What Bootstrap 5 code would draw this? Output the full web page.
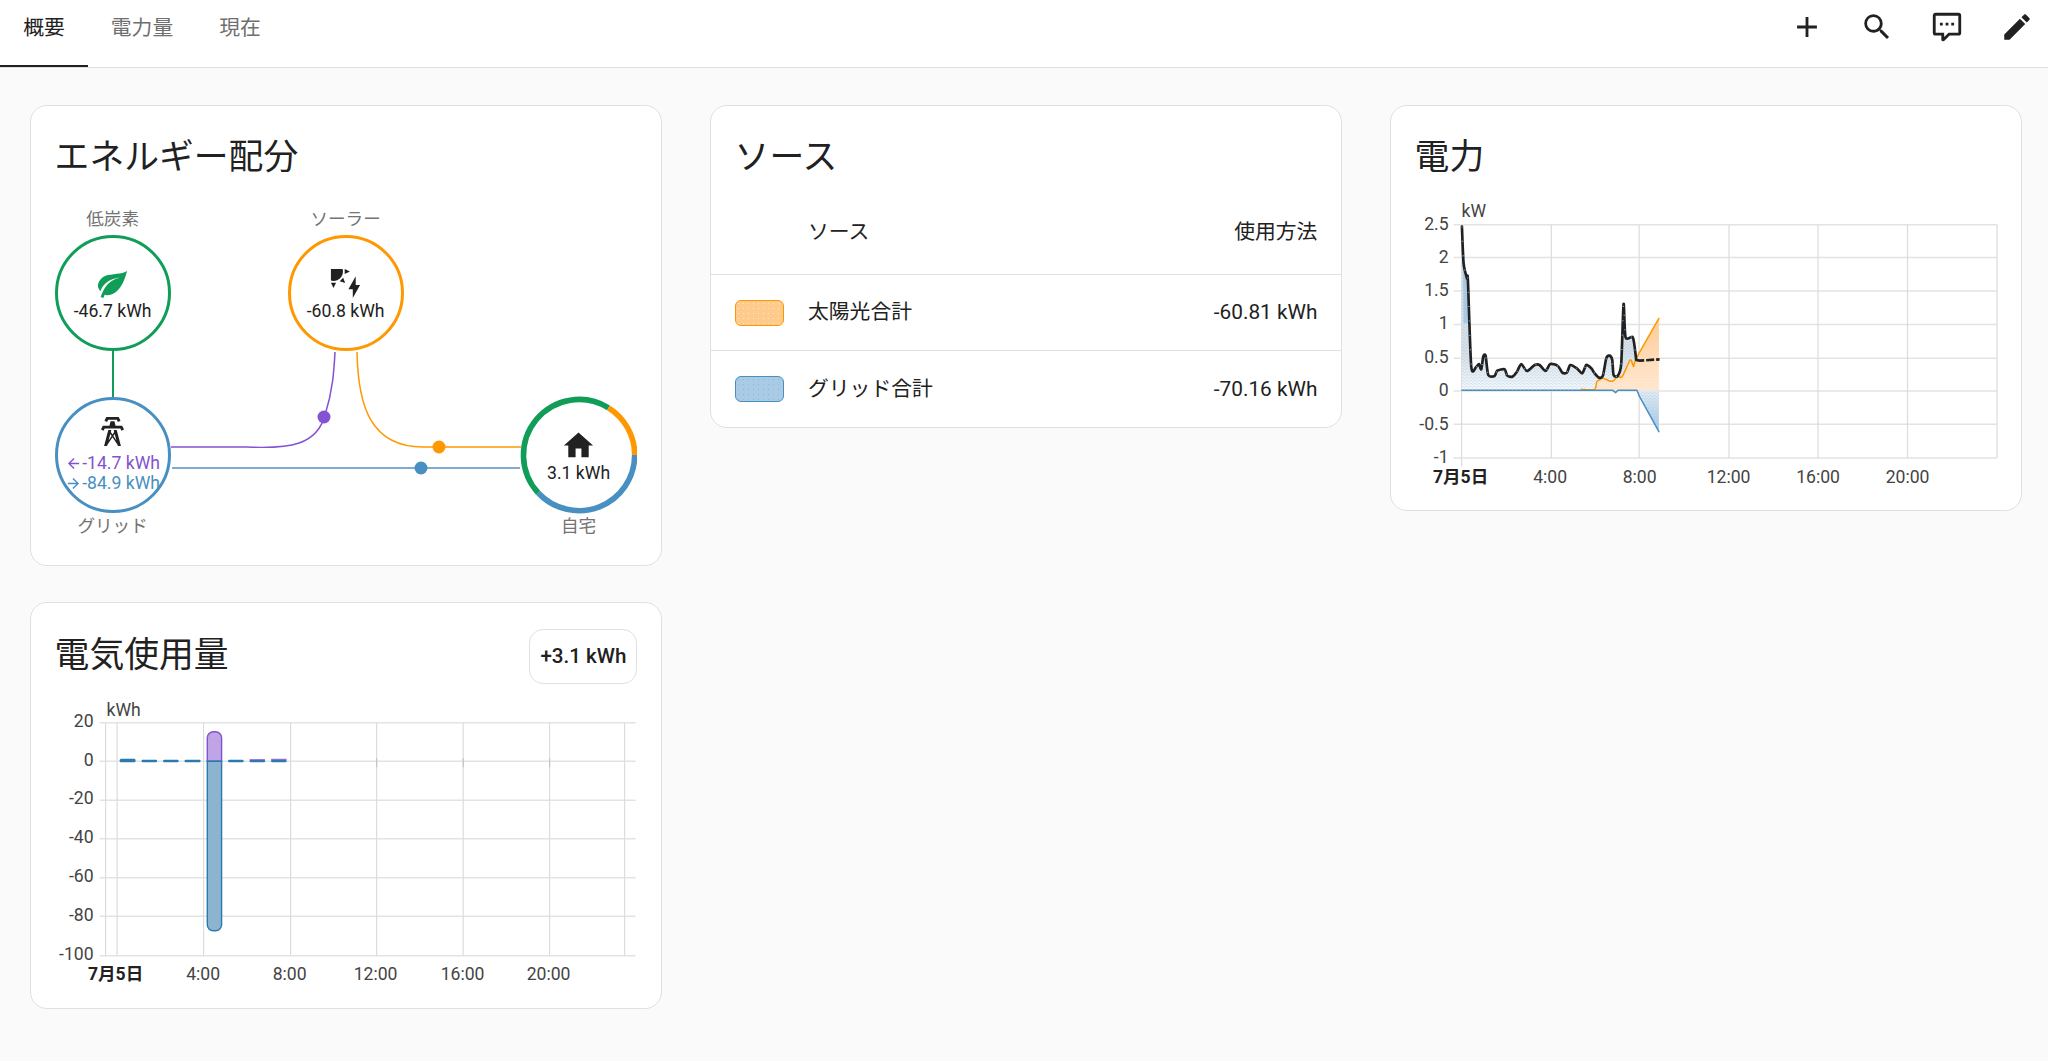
<!DOCTYPE html>
<html lang="ja">
<head>
    <meta charset="UTF-8">
    <meta name="viewport" content="width=device-width, initial-scale=1.0">
    <title>エネルギー</title>
    <link rel="stylesheet" href="https://cdn.jsdelivr.net/npm/bootstrap@5.3.0/dist/css/bootstrap.min.css">
    <style>
        body {
            background: #fafafa;
            color: #212121;
            font-family: Roboto, "Noto Sans CJK JP", sans-serif;
            font-size: 20.8px;
        }
        .top-bar {
            height: 68.4px;
            background: #fff;
            border-bottom: 1.4px solid #e0e0e0;
        }
        .tab-link {
            width: 88px;
            height: 67px;
            padding: 0;
            line-height: 57px;
            text-align: center;
            color: #6f6f6f;
            font-size: 20.8px;
        }
        .tab-link.active {
            color: #212121;
            border-bottom: 2.8px solid #212121;
        }
        .tab-link + .tab-link { margin-left: 10px; }
        .bar-icons {
            gap: 36px;
            padding-right: 14.5px;
            padding-bottom: 14px;
        }
        .bar-icons svg { width: 34px; height: 34px; fill: #212121; }
        .page-cols {
            gap: 48px;
            padding: 36.6px 26px 0 30px;
        }
        .page-col {
            width: 632px;
            gap: 36px;
        }
        .dash-card {
            --bs-card-border-color: #e0e0e0;
            --bs-card-border-width: 1.4px;
            --bs-card-border-radius: 17px;
            --bs-card-inner-border-radius: 16px;
            background: #fff;
        }
        .dash-head {
            height: 84.6px;
            padding: 31.5px 23.6px 0;
        }
        .dash-title {
            font-size: 34.8px;
            font-weight: 400;
            line-height: 1.2;
            margin: 0;
            color: #212121;
        }
        .usage-head { padding-top: 0; }
        .usage-head .dash-title { margin-top: 32px; }
        .total-chip {
            height: 55px;
            width: 108px;
            margin-top: 25.6px;
            border: 1.4px solid #e0e0e0;
            border-radius: 14px;
            background: #fff;
            color: #212121;
            font-size: 20.6px;
            font-weight: 500;
            padding: 0;
        }
        .flow-area {
            position: relative;
            width: 582px;
            height: 340px;
            margin: 9px 0 25.4px 23.6px;
        }
        .flow-lines {
            position: absolute;
            left: 0;
            top: 0;
            width: 582px;
            height: 340px;
        }
        .flow-node {
            position: absolute;
            width: 116px;
            text-align: center;
        }
        .flow-label {
            height: 35px;
            line-height: 38px;
            font-size: 17.6px;
            color: #737373;
        }
        .flow-label.under { height: 26px; line-height: 27px; }
        .flow-ring {
            width: 116px;
            height: 116px;
            padding-top: 2px;
            border-radius: 50%;
            border: 3.4px solid #0f9d58;
            background: #fff;
            font-size: 17.6px;
            line-height: 20px;
            color: #212121;
            white-space: nowrap;
        }
        .flow-ring svg.node-icon { width: 35px; height: 35px; fill: #212121; flex: none; }
        .flow-ring svg.node-icon.leaf-icon { fill: #0f9d58; }
        .flow-ring svg.node-arrow { width: 17px; height: 17px; fill: currentColor; flex: none; }
        .ring-solar { border-color: #ff9800; }
        .ring-grid { border-color: #488fc2; padding: 0 0 2px; }
        .ring-home { border-color: transparent; background: none; }
        .text-return { color: #8353d1; }
        .text-grid { color: #488fc2; }
        .node-low { left: 0; top: 0; }
        .node-solar { left: 233px; top: 0; }
        .node-grid { left: 0; top: 197px; }
        .node-home { left: 466px; top: 197px; }
        .source-table {
            --bs-table-border-color: #e0e0e0;
            --bs-table-bg: transparent;
            font-size: 20.8px;
            color: #212121;
            margin: 0;
        }
        .source-table th { height: 84px; font-weight: 400; border-bottom-width: 1.4px; padding: 0 23.6px 0 0; }
        .source-table td { height: 76.4px; border-bottom-width: 1.4px; padding: 0 23.6px 0 0; }
        .source-table tr:last-child td { border-bottom: 0; height: 76.2px; }
        .source-table .swatch-cell { width: 97px; padding: 0 0 0 23.6px; }
        .source-swatch {
            width: 49.5px;
            height: 26px;
            border-radius: 6px;
            border: 1.4px solid #ff9800;
            background-color: #ffcb8d;
            background-image: radial-gradient(#ffe6c8 .7px, transparent .8px);
            background-size: 5px 5px;
        }
        .source-swatch.grid-swatch {
            border-color: #488fc2;
            background-color: #a9cbe6;
            background-image: radial-gradient(#8fb6d6 .7px, transparent .8px);
        }
        .chart-svg { display: block; }
        .chart-svg text { font-size: 17.6px; fill: #444; font-family: Roboto, "Noto Sans CJK JP", sans-serif; }
        .chart-svg text.day-tick { font-weight: 700; fill: #212121; }
        .grid-line { stroke: #e3e3e3; stroke-width: 1.4; fill: none; }
        .grid-line .grid-vert { stroke: #dcdcdc; stroke-width: 1.2; }
    </style>
</head>
<body>
    <!-- Top bar -->
    <header class="top-bar d-flex justify-content-between align-items-center">
        <nav class="nav align-self-start">
            <a class="nav-link tab-link active" href="#">概要</a>
            <a class="nav-link tab-link" href="#">電力量</a>
            <a class="nav-link tab-link" href="#">現在</a>
        </nav>
        <div class="bar-icons d-flex align-items-center">
            <svg viewBox="0 0 24 24"><path d="M19,13H13V19H11V13H5V11H11V5H13V11H19V13Z"/></svg>
            <svg viewBox="0 0 24 24"><path d="M9.5,3A6.5,6.5 0 0,1 16,9.5C16,11.11 15.41,12.59 14.44,13.73L14.71,14H15.5L20.5,19L19,20.5L14,15.5V14.71L13.73,14.44C12.59,15.41 11.11,16 9.5,16A6.5,6.5 0 0,1 3,9.5A6.5,6.5 0 0,1 9.5,3M9.5,5C7,5 5,7 5,9.5C5,12 7,14 9.5,14C12,14 14,12 14,9.5C14,7 12,5 9.5,5Z"/></svg>
            <svg viewBox="0 0 24 24"><path d="M9,22A1,1 0 0,1 8,21V18H4A2,2 0 0,1 2,16V4C2,2.89 2.9,2 4,2H20A2,2 0 0,1 22,4V16A2,2 0 0,1 20,18H13.9L10.2,21.71C10,21.9 9.75,22 9.5,22V22H9M10,16V19.08L13.08,16H20V4H4V16H10M17,11V9H15V11H17M13,11V9H11V11H13M9,11V9H7V11H9Z"/></svg>
            <svg viewBox="0 0 24 24"><path d="M20.71,7.04C21.1,6.65 21.1,6 20.71,5.63L18.37,3.29C18,2.9 17.35,2.9 16.96,3.29L15.12,5.12L18.87,8.87M3,17.25V21H6.75L17.81,9.93L14.06,6.18L3,17.25Z"/></svg>
        </div>
    </header>

    <main class="page-cols d-flex align-items-start">
        <!-- Left column -->
        <div class="page-col d-flex flex-column">
            <section class="card dash-card">
                <div class="dash-head"><h2 class="dash-title">エネルギー配分</h2></div>
                <div class="flow-area">
                    <svg class="flow-lines" viewBox="0 0 582 340" fill="none">
                        <path d="M58 151V197" stroke="#0f9d58" stroke-width="2"/>
                        <path d="M116 247H192C235 249 262 245 270 215C278 190 279 170 280 152" stroke="#8353d1" stroke-width="1.5"/>
                        <path d="M302 152C303 205 315 247 368 247H466" stroke="#ff9800" stroke-width="1.5"/>
                        <path d="M117 268H465" stroke="#7fabcd" stroke-width="2"/>
                        <circle cx="269" cy="217" r="6.5" fill="#8353d1"/>
                        <circle cx="384" cy="247" r="6.5" fill="#ff9800"/>
                        <circle cx="366" cy="268" r="6.5" fill="#488fc2"/>
                    </svg>
                    <div class="flow-node node-low">
                        <div class="flow-label">低炭素</div>
                        <div class="flow-ring d-flex flex-column align-items-center justify-content-center">
                            <svg class="node-icon leaf-icon" viewBox="0 0 24 24"><path d="M17,8C8,10 5.9,16.17 3.82,21.34L5.71,22L6.66,19.7C7.14,19.87 7.64,20 8,20C19,20 22,3 22,3C21,5 14,5.25 9,6.25C4,7.25 2,11.5 2,13.5C2,15.5 3.75,17.25 3.75,17.25C7,8 17,8 17,8Z"/></svg>
                            <div>-46.7 kWh</div>
                        </div>
                    </div>
                    <div class="flow-node node-solar">
                        <div class="flow-label">ソーラー</div>
                        <div class="flow-ring ring-solar d-flex flex-column align-items-center justify-content-center">
                            <svg class="node-icon" viewBox="0 0 24 24"><path d="M11.45,2V5.55L15,3.77L11.45,2M10.45,8L8,10.46L11.75,11.71L10.45,8M2,11.45L3.77,15L5.55,11.45H2M10,2H2V10C2.57,10.17 3.17,10.25 3.77,10.25C7.35,10.26 10.26,7.35 10.27,3.75C10.26,3.16 10.17,2.57 10,2M17,22V16H14L19,7V13H22L17,22Z"/></svg>
                            <div>-60.8 kWh</div>
                        </div>
                    </div>
                    <div class="flow-node node-grid">
                        <div class="flow-ring ring-grid d-flex flex-column align-items-center justify-content-center">
                            <svg class="node-icon" viewBox="0 0 24 24"><path d="M8.28,5.45L6.5,4.55L7.76,2H16.23L17.5,4.55L15.72,5.44L15,4H9L8.28,5.45M18.62,8H14.09L13.3,5H10.7L9.91,8H5.38L4.1,10.55L5.89,11.44L6.62,10H17.38L18.1,11.45L19.89,10.56L18.62,8M17.77,22H15.7L15.46,21.1L12,15.9L8.53,21.1L8.3,22H6.23L9.12,11H11.19L10.83,12.35L12,14.1L13.16,12.35L12.81,11H14.88L17.77,22M11.4,15L10.5,13.65L9.32,18.13L11.4,15M14.68,18.12L13.5,13.64L12.6,15L14.68,18.12Z"/></svg>
                            <div class="text-return d-flex align-items-center mt-1"><svg class="node-arrow" viewBox="0 0 24 24"><path d="M20,11V13H8L13.5,18.5L12.08,19.92L4.16,12L12.08,4.08L13.5,5.5L8,11H20Z"/></svg>-14.7 kWh</div>
                            <div class="text-grid d-flex align-items-center"><svg class="node-arrow" viewBox="0 0 24 24"><path d="M4,11V13H16L10.5,18.5L11.92,19.92L19.84,12L11.92,4.08L10.5,5.5L16,11H4Z"/></svg>-84.9 kWh</div>
                        </div>
                        <div class="flow-label under">グリッド</div>
                    </div>
                    <div class="flow-node node-home">
                        <div class="flow-ring ring-home d-flex flex-column align-items-center justify-content-center">
                            <svg class="node-icon" viewBox="0 0 24 24"><path d="M10,20V14H14V20H19V12H22L12,3L2,12H5V20H10Z"/></svg>
                            <div>3.1 kWh</div>
                        </div>
                        <div class="flow-label under">自宅</div>
                    </div>
                    <svg class="flow-lines" viewBox="0 0 582 340" fill="none" stroke-width="5.6">
                        <path d="M483.3 293A55.7 55.7 0 0 1 553.5 207.8" stroke="#0f9d58"/>
                        <path d="M553.5 207.8A55.7 55.7 0 0 1 579.7 255" stroke="#ff9800"/>
                        <path d="M579.7 255A55.7 55.7 0 0 1 483.3 293" stroke="#488fc2"/>
                    </svg>
                </div>
            </section>

            <section class="card dash-card">
                <div class="dash-head usage-head d-flex justify-content-between align-items-start">
                    <h2 class="dash-title">電気使用量</h2>
                    <button class="btn total-chip" type="button">+3.1 kWh</button>
                </div>
                <svg class="chart-svg" width="629.2" height="320.6" viewBox="31.4 688.7 629.2 320.6">
                    <text x="107" y="716.5">kWh</text>
                    <g class="grid-line">
                        <path d="M100 723.5H636M100 762H636M100 801H636M100 839.5H636M100 878.5H636M100 917H636M100 956.5H636"/>
                        <path class="grid-vert" d="M106 723.5V956.5M117.5 723.5V956.5M204 723.5V956.5M291 723.5V956.5M377 723.5V956.5M463.6 723.5V956.5M550 723.5V956.5M625 723.5V956.5"/>
                    </g>
                    <path d="M377 759V768M463.6 759V768M550 759V768" stroke="#c4c4c4" stroke-width="1.2"/>
                    <g text-anchor="end">
                        <text x="94" y="728">20</text>
                        <text x="94" y="767">0</text>
                        <text x="94" y="805">-20</text>
                        <text x="94" y="844">-40</text>
                        <text x="94" y="883">-60</text>
                        <text x="94" y="922">-80</text>
                        <text x="94" y="961">-100</text>
                    </g>
                    <g text-anchor="middle">
                        <text class="day-tick" x="116" y="981">7月5日</text>
                        <text x="203.5" y="981">4:00</text>
                        <text x="290" y="981">8:00</text>
                        <text x="376" y="981">12:00</text>
                        <text x="463" y="981">16:00</text>
                        <text x="549" y="981">20:00</text>
                    </g>
                    <!-- daily bars, almost all of them sit on the zero line -->
                    <g fill="#2a7ab0">
                        <rect x="120" y="759.5" width="16" height="3.5" rx="1.5"/>
                        <rect x="142" y="760.5" width="15.5" height="2.5" rx="1"/>
                        <rect x="163.5" y="760.5" width="15.5" height="2.5" rx="1"/>
                        <rect x="185" y="760.5" width="16" height="2.5" rx="1"/>
                        <rect x="228.5" y="760.5" width="15.5" height="2.5" rx="1"/>
                        <rect x="250" y="760.5" width="15.5" height="2.5" rx="1"/>
                        <rect x="271.5" y="760.5" width="15.5" height="2.5" rx="1"/>
                    </g>
                    <path d="M250 760.5H265.5M271.5 760H287" stroke="#8353d1" stroke-width="1"/>
                    <path d="M207.7 762V738.5A6 6 0 0 1 213.7 732.5H216A6 6 0 0 1 222 738.5V762Z" fill="#bfa5e6" stroke="#8353d1" stroke-width="1.4"/>
                    <path d="M207.7 762V925.5A6 6 0 0 0 213.7 931.5H216A6 6 0 0 0 222 925.5V762Z" fill="#8cb4d0" stroke="#2a7ab0" stroke-width="1.4"/>
                </svg>
            </section>
        </div>

        <!-- Middle column -->
        <div class="page-col d-flex flex-column">
            <section class="card dash-card">
                <div class="dash-head"><h2 class="dash-title">ソース</h2></div>
                <table class="table source-table">
                    <thead class="align-middle">
                        <tr><th class="swatch-cell"></th><th>ソース</th><th class="text-end">使用方法</th></tr>
                    </thead>
                    <tbody class="align-middle">
                        <tr>
                            <td class="swatch-cell"><div class="source-swatch"></div></td>
                            <td>太陽光合計</td>
                            <td class="text-end">-60.81 kWh</td>
                        </tr>
                        <tr>
                            <td class="swatch-cell"><div class="source-swatch grid-swatch"></div></td>
                            <td>グリッド合計</td>
                            <td class="text-end">-70.16 kWh</td>
                        </tr>
                    </tbody>
                </table>
            </section>
        </div>

        <!-- Right column -->
        <div class="page-col d-flex flex-column">
            <section class="card dash-card">
                <div class="dash-head"><h2 class="dash-title">電力</h2></div>
                <svg class="chart-svg" width="629.2" height="319" viewBox="1391.4 191 629.2 319">
                    <defs>
                        <pattern id="dotsBlue" width="12" height="9" patternUnits="userSpaceOnUse">
                            <circle cx="3" cy="2" r="1.6" fill="#8fbce0"/>
                            <circle cx="9" cy="6.5" r="1.6" fill="#8fbce0"/>
                        </pattern>
                        <pattern id="dotsOrange" width="12" height="9" patternUnits="userSpaceOnUse">
                            <circle cx="3" cy="2" r="1.6" fill="#ffcf9e"/>
                            <circle cx="9" cy="6.5" r="1.6" fill="#ffcf9e"/>
                        </pattern>
                        <linearGradient id="fadeBlue" gradientUnits="userSpaceOnUse" x1="0" y1="430" x2="0" y2="541">
                            <stop offset="0" stop-color="#dbe1e7"/>
                            <stop offset="1" stop-color="#f9fbfc"/>
                        </linearGradient>
                        <linearGradient id="fadeDown" x1="0" y1="0" x2="0" y2="1">
                            <stop offset="0" stop-color="#e8eef3"/>
                            <stop offset="1" stop-color="#a3c8e6"/>
                        </linearGradient>
                        <linearGradient id="fadeOrange" gradientUnits="userSpaceOnUse" x1="0" y1="325" x2="0" y2="541">
                            <stop offset="0" stop-color="#ffc890"/>
                            <stop offset=".6" stop-color="#ffdfc0"/>
                            <stop offset="1" stop-color="#ffead6"/>
                        </linearGradient>
                    </defs>
                    <text x="1462" y="217">kW</text>
                    <g class="grid-line">
                        <path d="M1454 224.7H1997.5M1454 257.5H1997.5M1454 291H1997.5M1454 324.5H1997.5M1454 358.3H1997.5M1454 391H1997.5M1454 424.3H1997.5M1454 458H1997.5"/>
                        <path class="grid-vert" d="M1462 224.7V466M1551.7 224.7V458M1639.5 224.7V458M1729.4 224.7V458M1818.4 224.7V458M1907.9 224.7V458M1997.4 224.7V458"/>
                    </g>
                    <g text-anchor="end">
                        <text x="1449" y="230">2.5</text>
                        <text x="1449" y="263">2</text>
                        <text x="1449" y="296.5">1.5</text>
                        <text x="1449" y="329.5">1</text>
                        <text x="1449" y="363">0.5</text>
                        <text x="1449" y="396">0</text>
                        <text x="1449" y="430">-0.5</text>
                        <text x="1449" y="463">-1</text>
                    </g>
                    <g text-anchor="middle">
                        <text class="day-tick" x="1461" y="483">7月5日</text>
                        <text x="1550.5" y="483">4:00</text>
                        <text x="1640" y="483">8:00</text>
                        <text x="1729" y="483">12:00</text>
                        <text x="1818.5" y="483">16:00</text>
                        <text x="1908" y="483">20:00</text>
                    </g>
                    <!-- traces measured at 3x, so the group below is scaled by a third -->
                    <g transform="translate(1440 210) scale(.3333)" fill="none" stroke-linejoin="round" stroke-linecap="round">
                        <path id="homeFill" fill="url(#fadeBlue)"/>
                        <path id="homeDots" fill="url(#dotsBlue)"/>
                        <path d="M70 160L82 205L87 340L72 340Z" fill="#a8c8e4"/>
                        <path id="solarFill" fill="url(#fadeOrange)"/>
                        <path id="solarDots" fill="url(#dotsOrange)"/>
                        <path d="M592 542L600 560L658 665V542Z" fill="url(#fadeDown)"/>
                        <path d="M592 542L600 560L658 665V542Z" fill="url(#dotsBlue)"/>
                        <path id="solarLine" stroke="#ff9800" stroke-width="4.5"/>
                        <path d="M67 541H520L528 548L535 541H592L600 560L658 665" stroke="#488fc2" stroke-width="4.5"/>
                        <path id="homeLine" stroke="#212121" stroke-width="8"/>
                        <path id="homeDash" stroke="#6ea9d8" stroke-width="4" stroke-linecap="butt" stroke-dasharray="3 40"/>
                        <path d="M590 450L600 452L660 448" stroke="#212121" stroke-width="8" stroke-linecap="butt" stroke-dasharray="24 6"/>
                    </g>
                </svg>
            </section>
        </div>
    </main>

    <script src="https://cdn.jsdelivr.net/npm/bootstrap@5.3.0/dist/js/bootstrap.bundle.min.js"></script>
    <script>
        const homePts = [[67,50],[72,160],[82,205],[85,212],[95,470],[110,470],[118,462],[125,478],[131,440],[138,437],[146,495],[165,498],[173,482],[195,478],[203,497],[218,500],[232,485],[245,462],[262,483],[285,465],[300,465],[318,483],[332,462],[355,468],[368,488],[382,488],[392,465],[412,475],[428,490],[440,465],[455,475],[465,490],[478,503],[490,497],[500,445],[510,437],[518,450],[522,495],[535,497],[545,460],[552,282],[558,382],[580,383],[590,450]];
        const solarPts = [[425,538],[465,538],[472,515],[490,505],[510,513],[520,513],[535,500],[548,500],[572,450],[582,470],[590,445],[658,325]];

        // Soft curve through the points, the chart lines are not jagged
        function curve(pts) {
            let d = `M${pts[0][0]} ${pts[0][1]}`;
            for (let i = 0; i < pts.length - 1; i++) {
                const p0 = pts[Math.max(i - 1, 0)];
                const p1 = pts[i];
                const p2 = pts[i + 1];
                const p3 = pts[Math.min(i + 2, pts.length - 1)];
                const c1 = [p1[0] + (p2[0] - p0[0]) / 8, p1[1] + (p2[1] - p0[1]) / 8];
                const c2 = [p2[0] - (p3[0] - p1[0]) / 8, p2[1] - (p3[1] - p1[1]) / 8];
                d += `C${c1[0]} ${c1[1]} ${c2[0]} ${c2[1]} ${p2[0]} ${p2[1]}`;
            }
            return d;
        }

        const homeCurve = curve(homePts);
        const solarCurve = curve(solarPts);
        const setPath = (id, d) => document.getElementById(id).setAttribute('d', d);

        setPath('homeLine', homeCurve);
        setPath('homeDash', homeCurve);
        setPath('homeFill', homeCurve + 'L592 541L67 541Z');
        setPath('homeDots', homeCurve + 'L592 541L67 541Z');
        setPath('solarLine', solarCurve);
        setPath('solarFill', solarCurve + 'L658 541L425 541Z');
        setPath('solarDots', solarCurve + 'L658 541L425 541Z');
    </script>
</body>
</html>
